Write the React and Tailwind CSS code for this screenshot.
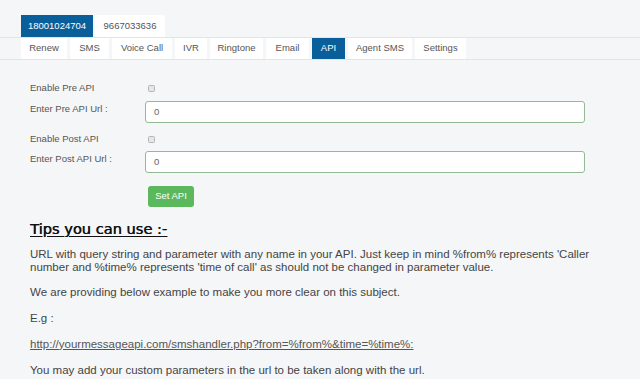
const numbers = ['18001024704', '9667033636'];
const menu = [
  ['Renew', 'w-[46px]'],
  ['SMS', 'w-[39px]'],
  ['Voice Call', 'w-[60px]'],
  ['IVR', 'w-[32px]'],
  ['Ringtone', 'w-[53px]'],
  ['Email', 'w-[43px]'],
  ['API', 'w-[33px]'],
  ['Agent SMS', 'w-[64px]'],
  ['Settings', 'w-[51px]'],
];

function Checkbox() {
  return <span className="block h-[7px] w-[7px] rounded-[1.5px] border border-[#b5b5b5] bg-[#e6e6e6]" />;
}

function UrlInput() {
  return (
    <div className="flex h-[22px] w-[440px] items-center rounded-[3px] border border-[#93bb93] bg-white pl-[8px] text-[9.5px] text-[#666]">
      0
    </div>
  );
}

export default function App() {
  return (
    <main className="min-h-screen bg-[#f5f6f8] font-['Liberation_Sans',Arial,sans-serif] text-[#444]">
      <div className="flex gap-[2px] pl-[21px] pt-[15px]">
        {numbers.map((n, i) => (
          <div
            key={n}
            className={
              i === 0
                ? 'flex h-[22px] w-[72px] items-center justify-center bg-[#0a5e9a] text-[9.5px] text-white'
                : 'flex h-[22px] w-[70px] items-center justify-center bg-white text-[9.5px] text-[#555]'
            }
          >
            {n}
          </div>
        ))}
      </div>

      <nav className="flex gap-[3px] border-y border-[#e2e4e7] pl-[21px]">
        {menu.map(([m, w]) => (
          <div
            key={m}
            className={
              m === 'API'
                ? `flex h-[21px] items-center justify-center bg-[#0a5e9a] text-[9.5px] text-white ${w}`
                : `flex h-[21px] items-center justify-center bg-white text-[9.5px] text-[#555] ${w}`
            }
          >
            {m}
          </div>
        ))}
      </nav>

      <form className="pl-[30px] pt-[20px] text-[9.5px] text-[#555]">
        <div className="flex h-[16px] items-center">
          <span className="w-[118px]">Enable Pre API</span>
          <Checkbox />
        </div>
        <div className="mt-[5px] flex">
          <span className="w-[115px] pt-[1px]">Enter Pre API Url :</span>
          <UrlInput />
        </div>
        <div className="mt-[8px] flex h-[16px] items-center">
          <span className="w-[118px]">Enable Post API</span>
          <Checkbox />
        </div>
        <div className="mt-[4px] flex">
          <span className="w-[115px] pt-[1px]">Enter Post API Url :</span>
          <UrlInput />
        </div>
        <button
          type="button"
          className="ml-[118px] mt-[13px] h-[21px] w-[46px] rounded-[3px] bg-[#5cb85c] text-[9.5px] text-white"
        >
          Set API
        </button>
      </form>

      <section className="w-[615px] pl-[30px] pt-[13px]">
        <h2 className="font-['DejaVu_Sans',Verdana,sans-serif] text-[14.6px] leading-[17px] text-[#111] underline underline-offset-[2px] [text-shadow:0.5px_0_0_#111]">
          Tips you can use :-
        </h2>
        <div className="mt-[11px] text-[11.5px] leading-[12.7px] text-[#444]">
          <p className="mb-[13px]">
            URL with query string and parameter with any name in your API. Just keep in mind %from% represents 'Caller
            number and %time% represents 'time of call' as should not be changed in parameter value.
          </p>
          <p className="mb-[13px]">We are providing below example to make you more clear on this subject.</p>
          <p className="mb-[13px]">E.g :</p>
          <p className="mb-[13px]">
            <a href="#" className="text-[#555] underline">
              http://yourmessageapi.com/smshandler.php?from=%from%&amp;time=%time%:
            </a>
          </p>
          <p>You may add your custom parameters in the url to be taken along with the url.</p>
        </div>
      </section>
    </main>
  );
}
